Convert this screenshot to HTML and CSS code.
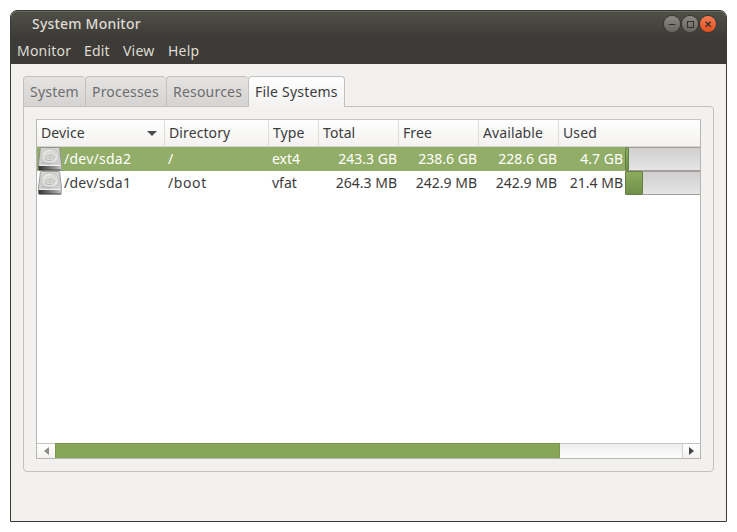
FILE: index.html
```
<!DOCTYPE html>
<html lang="en">
<head>
<meta charset="utf-8">
<title>System Monitor</title>
<link rel="stylesheet" href="styles.css">
</head>
<body>
<svg width="0" height="0" class="defs" aria-hidden="true">
  <defs>
    <linearGradient id="top" x1="0" y1="0" x2="0" y2="1"><stop offset="0" stop-color="#d6d6d4"/><stop offset="1" stop-color="#cacac8"/></linearGradient>
    <linearGradient id="front" x1="0" y1="0" x2="1" y2="0"><stop offset="0" stop-color="#333"/><stop offset=".5" stop-color="#777"/><stop offset="1" stop-color="#c5c5c5"/></linearGradient>
    <symbol id="disk" viewBox="0 0 24 24">
      <path d="M3.500 .5h17c.6 0 1 .3 1.100.8l2 16.500v4.500c0 .7-.4 1-1 1H1.400c-.6 0-1-.3-1-1V17.800l2-16.500c.1-.5.500-.8 1.100-.8z" fill="url(#top)" stroke="#888" stroke-width=".8"/>
      <path d="M.6 18.800h22.800v3.400c0 .6-.3.900-.9.900H1.500c-.6 0-.9-.3-.9-.9z" fill="url(#front)"/>
      <path d="M1.200 18.400h21.600" stroke="#f4f4f4"/>
      <ellipse cx="12" cy="9.500" rx="9" ry="7.500" fill="#dadad8" stroke="#bcbcb9" stroke-width=".7"/>
      <path d="M5 7.500Q8 3 14 3.500M19 10q-2 4-7 4.500" fill="none" stroke="#ececec" stroke-width="1.300"/>
      <ellipse cx="12" cy="11" rx="4.300" ry="2.600" fill="#dcdcda" stroke="#b0b0ae" stroke-width=".8"/>
      <ellipse cx="12" cy="11" rx="1.300" ry=".7" fill="#aaa"/>
      <path d="M4 15.500q5 2 10 .8" fill="none" stroke="#aaa" stroke-width=".8"/>
      <path d="M1 22.900h22" stroke="#3b3b3b" stroke-width=".7"/>
    </symbol>
  </defs>
</svg>
<div class="window">
  <header class="chrome">
    <div class="titlebar">
      <h1 class="title">System Monitor</h1>
      <div class="controls">
        <span class="control"><svg viewBox="0 0 16 16"><path d="M4.500 8.500h7"/></svg></span>
        <span class="control"><svg viewBox="0 0 16 16"><path d="M5.500 5.500h6v6h-6z"/></svg></span>
        <span class="control close"><svg viewBox="0 0 16 16"><path d="M5.700 5.700l5 5m0-5l-5 5"/></svg></span>
      </div>
    </div>
    <nav class="menu"><span class="m-monitor">Monitor</span><span class="m-edit">Edit</span><span class="m-view">View</span><span>Help</span></nav>
  </header>
  <main class="content">
    <div class="tabs">
      <div class="tab t-system"><span>System</span></div>
      <div class="tab t-processes"><span>Processes</span></div>
      <div class="tab t-resources"><span>Resources</span></div>
      <div class="tab t-files active"><span>File Systems</span></div>
    </div>
    <section class="panel">
      <div class="list">
        <div class="row head">
          <div class="device">Device<i class="sort"></i></div><div>Directory</div><div>Type</div><div>Total</div><div>Free</div><div>Available</div><div>Used</div>
        </div>
        <div class="row selected">
          <div class="disk"><svg><use href="#disk"/></svg>/dev/sda2</div><div class="path">/</div><div>ext4</div><div class="num">243.3 GB</div><div class="num">238.6 GB</div><div class="num">228.6 GB</div><div class="usage"><span class="num">4.7 GB</span><div class="bar"><div class="fill" style="width:4px"></div></div></div>
        </div>
        <div class="row">
          <div class="disk"><svg><use href="#disk"/></svg>/dev/sda1</div><div class="path">/boot</div><div>vfat</div><div class="num">264.3 MB</div><div class="num">242.9 MB</div><div class="num">242.9 MB</div><div class="usage"><span class="num">21.4 MB</span><div class="bar"><div class="fill" style="width:18px"></div></div></div>
        </div>
        <div class="space"></div>
        <div class="scrollbar">
          <div class="arrow left"><svg viewBox="0 0 5 8"><path d="M5 0v8L0 4z"/></svg></div>
          <div class="thumb"></div>
          <div class="track"></div>
          <div class="arrow right"><svg viewBox="0 0 5 8"><path d="M0 0v8l5-4z"/></svg></div>
        </div>
      </div>
    </section>
  </main>
</div>
</body>
</html>
```
FILE: styles.css
```
* { box-sizing: border-box; }
body { margin: 0; padding: 10px; background: #fff; color: #3c3c3c; font: 14px/20px "Noto Sans", "Open Sans", sans-serif; }
.defs { position: absolute; }
.window { width: 717px; height: 512px; border: 1px solid #3c3b37; border-radius: 7px 7px 0 0; background: #f2f1f0; overflow: hidden; display: flex; flex-direction: column; }
.chrome { height: 53px; background: linear-gradient(#504f48, #3c3b37 27px); box-shadow: inset 0 1px #66655e; color: #dfdbd2; flex: none; }
.titlebar { height: 27px; display: flex; justify-content: space-between; padding: 3px 10px 0 21px; }
.title { margin: 0; font-size: 14px; line-height: 20px; font-weight: 500; letter-spacing: .2px; white-space: nowrap; }
.controls { display: flex; gap: 2px; padding-top: 2px; }
.control { width: 16px; height: 16px; border-radius: 50%; background: linear-gradient(#8b8a82, #67665f); box-shadow: 0 0 0 1px #383733; }
.control svg { display: block; width: 16px; height: 16px; fill: none; stroke: #33322e; stroke-width: 1.1; }
.close { background: linear-gradient(#f67a53, #e2501f); }
.control.close svg { stroke-width: 1.4; }
.menu { display: flex; padding: 3px 0 0 6px; letter-spacing: .2px; }
.m-monitor { width: 67px; }
.m-edit { width: 39px; }
.m-view { width: 45px; }
.content { padding: 12px; }
.tabs { display: flex; height: 31px; margin-bottom: -1px; position: relative; letter-spacing: .2px; }
.tab { height: 30px; border: 1px solid #c3c1be; border-width: 1px 0 0 1px; border-radius: 4px 4px 0 0; background: linear-gradient(#e4e3e1, #d6d4d2); color: #6d6d6d; padding: 5px 0 0 6px; white-space: nowrap; }
.t-system { width: 62px; }
.t-processes { width: 81px; }
.t-resources { width: 82px; }
.t-files { width: 97px; }
.tab.active { height: 31px; border-right-width: 1px; background: linear-gradient(#fefefe, #f3f2f1); color: #3c3c3c; }
.panel { width: 691px; height: 366px; border: 1px solid #c3c1be; border-radius: 0 4px 4px 4px; padding: 12px; }
.list { width: 665px; height: 340px; border: 1px solid #b8b6b2; border-top-color: #c6c4c1; background: #fff; display: flex; flex-direction: column; overflow: hidden; }
.row { display: grid; grid-template-columns: 128px 104px 50px 80px 80px 80px 1fr; height: 24px; white-space: nowrap; }
.row > div { padding: 2px 2px 0 3px; }
.row > .disk { display: flex; align-items: center; padding: 0 0 0 1px; gap: 2px; letter-spacing: .25px; }
.row > .path { letter-spacing: .6px; }
.disk svg { width: 24px; height: 24px; }
.selected { background: #92ad67; color: #fff; }
.head { height: 27px; background: linear-gradient(#fefefe, #f3f2f1); border-bottom: 1px solid #d6d4d1; letter-spacing: .1px; }
.head > div { padding: 3px 0 0 4px; border-right: 1px solid #dfddda; }
.head > div:last-child { border: 0; }
.device { display: flex; justify-content: space-between; }
.sort { width: 0; height: 0; border: 5px solid transparent; border-top-color: #4c4c4c; border-bottom: 0; margin: 8px 7px 0 0; }
.num { text-align: right; }
.row > .usage { display: flex; padding: 0; }
.usage .num { width: 66px; padding: 2px 2px 0 0; }
.bar { flex: 1; height: 24px; border: 1px solid #a59d99; border-width: 1px 0; background: linear-gradient(#cfcfcf, #e5e5e5); }
.fill { height: 24px; margin-top: -1px; border: 1px solid #62803f; border-radius: 2px; background: linear-gradient(#8cac5d, #718f4a); }
.space { flex: 1; }
.scrollbar { display: flex; height: 15px; border-top: 1px solid #c6c4c1; background: linear-gradient(#eeedec, #fefefe); }
.arrow { width: 18px; display: flex; align-items: center; justify-content: center; background: linear-gradient(#fff, #f3f2f1); }
.arrow svg { width: 5px; height: 8px; }
.left { fill: #8c8b87; }
.right { fill: #444; border-left: 1px solid #d2d0cd; }
.thumb { width: 505px; height: 16px; margin-top: -1px; background: #87a556; border: 1px solid #7b984e; }
.track { flex: 1; }
```
